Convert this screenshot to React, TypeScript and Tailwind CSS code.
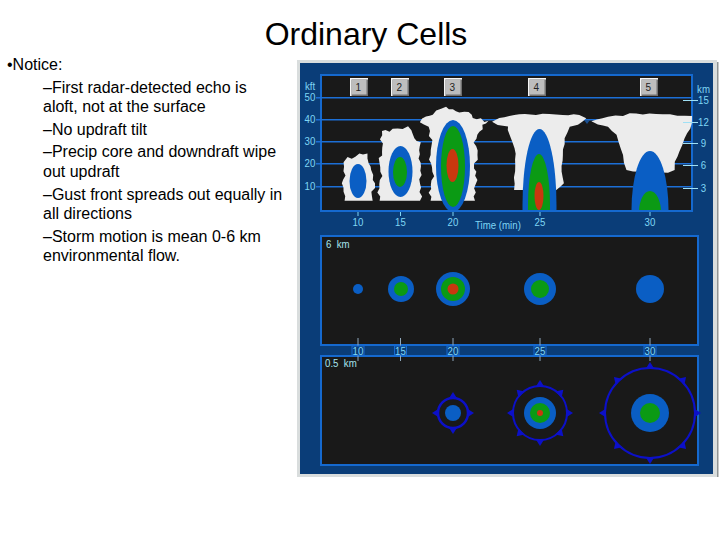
const BLUE = "#0a5ec4";
const GREEN = "#0b9a14";
const RED = "#c9380f";
const WHITE = "#ececec";
const BORDER = "#1569cf";
const INK = "#191919";
const FRAME = "#0a3d78";
const LABEL = "#7fd6f5";
const RING = "#0c10c8";

const notes: string[][] = [
  ["–First radar-detected echo is", "aloft, not at the surface"],
  ["–No updraft tilt"],
  ["–Precip core and downdraft wipe", "out updraft"],
  ["–Gust front spreads out equally in", "all directions"],
  ["–Storm motion is mean 0-6 km", "environmental flow."],
];

type Pt = [number, number];

// Breaks a cloud outline into small scallops; the closing edge (the flat base) stays straight.
function rough(points: Pt[], amp: number, step = 13): string {
  const out: Pt[] = [];
  let k = 0;
  for (let i = 0; i < points.length - 1; i++) {
    const [ax, ay] = points[i];
    const [bx, by] = points[i + 1];
    const len = Math.hypot(bx - ax, by - ay);
    const n = Math.max(1, Math.round(len / step));
    for (let j = 0; j < n; j++) {
      const t = j / n;
      const off = (Math.sin(k * 2.4) + 0.6 * Math.sin(k * 5.3 + 1)) * amp * (j === 0 ? 0.4 : 1);
      k++;
      out.push([ax + (bx - ax) * t - ((by - ay) / len) * off, ay + (by - ay) * t + ((bx - ax) / len) * off]);
    }
  }
  out.push(points[points.length - 1]);
  return `M${out.map(([x, y]) => `${x.toFixed(1)} ${y.toFixed(1)}`).join(" L")} Z`;
}

const cloud1: Pt[] = [[145, 437], [145, 410], [138, 385], [146, 362], [143, 322], [155, 308], [178, 305], [190, 295], [212, 296], [218, 325], [228, 345], [230, 375], [237, 385], [228, 410], [230, 437]];
const cloud2: Pt[] = [[250, 437], [250, 400], [254, 350], [250, 310], [258, 290], [258, 228], [290, 222], [320, 222], [335, 215], [348, 225], [355, 250], [372, 262], [370, 310], [375, 360], [372, 437]];
const cloud3: Pt[] = [[403, 437], [405, 390], [410, 350], [402, 300], [408, 255], [398, 215], [370, 200], [390, 185], [412, 180], [420, 165], [450, 155], [470, 165], [490, 172], [520, 170], [530, 190], [578, 198], [560, 210], [545, 240], [535, 262], [545, 300], [535, 340], [540, 350], [537, 437]];
const cloud4: Pt[] = [[654, 405], [658, 330], [656, 280], [636, 225], [636, 215], [605, 210], [588, 200], [610, 190], [640, 183], [670, 177], [720, 180], [760, 176], [800, 180], [850, 180], [871, 190], [846, 210], [821, 215], [806, 250], [801, 300], [796, 350], [804, 385], [781, 405]];
const cloud5: Pt[] = [[1011, 350], [991, 345], [981, 300], [961, 240], [936, 215], [906, 208], [886, 198], [936, 185], [981, 183], [1001, 175], [1100, 178], [1188, 183], [1188, 205], [1166, 250], [1151, 290], [1136, 320], [1136, 345], [1116, 353]];

function Label({ x, y, children, anchor = "middle", fill = LABEL }: { x: number; y: number; children: string; anchor?: "middle" | "start"; fill?: string }) {
  return (
    <text transform={`translate(${x} ${y}) scale(0.88 1)`} textAnchor={anchor} fontSize={11} fill={fill} fontFamily="'Liberation Sans',sans-serif" xmlSpace="preserve">
      {children}
    </text>
  );
}

function Key({ x, n }: { x: number; n: string }) {
  return (
    <g>
      <rect x={x} y={78} width={18} height={18} fill="#f6f6f6" />
      <rect x={x + 1.5} y={79.5} width={16.5} height={16.5} fill="#6f6f6f" />
      <rect x={x + 1.5} y={79.5} width={15} height={15} fill="#bdbdbd" />
      <text x={x + 5.5} y={91} fontSize={10} fill="#222222" fontFamily="'Liberation Sans',sans-serif">{n}</text>
    </g>
  );
}

function Ring({ cx, cy, r, count, width = 2 }: { cx: number; cy: number; r: number; count: number; width?: number }) {
  const marks = Array.from({ length: count }, (_, i) => (i * 360) / count);
  return (
    <g>
      <circle cx={cx} cy={cy} r={r} fill="none" stroke={RING} strokeWidth={width} />
      {marks.map((a) => (
        <polygon
          key={a}
          points={`${cx - 4.5},${cy - r + 1} ${cx + 4.5},${cy - r + 1} ${cx},${cy - r - 6}`}
          fill={RING}
          transform={`rotate(${a} ${cx} ${cy})`}
        />
      ))}
    </g>
  );
}

function Figure() {
  const leftRows: [number, string][] = [[97, "50"], [119, "40"], [141, "30"], [163, "20"], [186, "10"]];
  const rightRows: [number, string][] = [[100, "15"], [122, "12"], [143, "9"], [165, "6"], [188, "3"]];
  const times: [number, string][] = [[358, "10"], [400.5, "15"], [453, "20"], [540, "25"], [650, "30"]];
  return (
    <svg width={423} height={420} viewBox="297 60 423 420" className="block shrink-0">
      <rect x={297} y={60} width={420} height={417} fill="#d9dddd" />
      <rect x={300} y={63} width={413} height={411} fill={FRAME} />
      <rect x={717} y={62} width={1.5} height={415} fill="#8f9494" />

      <rect x={321} y={75} width={371} height={136} fill={INK} stroke={BORDER} strokeWidth={2} />
      <rect x={321} y={236} width={377} height={109} fill={INK} stroke={BORDER} strokeWidth={2} />
      <rect x={321} y={356} width={377} height={109} fill={INK} stroke={BORDER} strokeWidth={2} />

      {leftRows.map(([y]) => (
        <line key={y} x1={316} x2={692} y1={y + 0.75} y2={y + 0.75} stroke="#1c6fd6" strokeWidth={1.5} />
      ))}

      <clipPath id="plot">
        <rect x={322} y={76} width={369} height={134} />
      </clipPath>

      <g transform="translate(296 55) scale(0.33333)" fill={WHITE}>
        <path d={rough(cloud1, 4)} />
        <path d={rough(cloud2, 4)} />
        <path d={rough(cloud3, 4)} />
        <path d={rough(cloud4, 1.5, 20)} />
        <path d={rough(cloud5, 1.5, 20)} />
      </g>
      <polygon points="584,120 590,120 587,124" fill="#1a4f90" />

      <g clipPath="url(#plot)">
        <ellipse cx={358} cy={181} rx={8.5} ry={17} fill={BLUE} />
        <ellipse cx={400.5} cy={171.5} rx={12} ry={25.5} fill={BLUE} />
        <ellipse cx={400} cy={172} rx={7} ry={15} fill={GREEN} />
        <ellipse cx={453} cy={166} rx={17} ry={46} fill={BLUE} />
        <ellipse cx={453} cy={166.5} rx={12} ry={40.5} fill={GREEN} />
        <ellipse cx={452.5} cy={165.5} rx={6} ry={16.5} fill={RED} />
        <ellipse cx={539.5} cy={205} rx={17} ry={76} fill={BLUE} />
        <ellipse cx={539} cy={205} rx={11} ry={51} fill={GREEN} />
        <ellipse cx={539} cy={196} rx={4.5} ry={14} fill={RED} />
        <ellipse cx={650} cy={210} rx={18.5} ry={59} fill={BLUE} />
        <ellipse cx={650} cy={212} rx={11} ry={21} fill={GREEN} />
      </g>

      {rightRows.map(([y]) => (
        <line key={y} x1={683} x2={698} y1={y + 0.5} y2={y + 0.5} stroke="#9fe0f5" strokeWidth={1} />
      ))}

      <Key x={350} n="1" />
      <Key x={391} n="2" />
      <Key x={444} n="3" />
      <Key x={528} n="4" />
      <Key x={640} n="5" />

      <Label x={310} y={90}>kft</Label>
      {leftRows.map(([y, t]) => (
        <Label key={y} x={310} y={y + 4}>{t}</Label>
      ))}
      <Label x={703.5} y={92.5}>km</Label>
      {rightRows.map(([y, t]) => (
        <Label key={y} x={703.5} y={y + 4}>{t}</Label>
      ))}

      {times.map(([x, t]) => (
        <g key={t}>
          <line x1={x} x2={x} y1={212} y2={216} stroke={LABEL} strokeWidth={1} />
          <Label x={x} y={226}>{t}</Label>
          <line x1={x} x2={x} y1={338} y2={361} stroke="#8fa8bd" strokeWidth={1} />
          <rect x={x - 6} y={346} width={12} height={9} fill={FRAME} stroke={BORDER} strokeWidth={1} />
          <Label x={x} y={354.5}>{t}</Label>
        </g>
      ))}
      <Label x={475} y={229} anchor="start">Time (min)</Label>
      <Label x={326} y={248} anchor="start" fill="#a6e4ee">6  km</Label>
      <Label x={325} y={367} anchor="start" fill="#a6e4ee">0.5  km</Label>

      <circle cx={358} cy={289} r={5} fill={BLUE} />
      <circle cx={401} cy={289} r={13} fill={BLUE} />
      <circle cx={401} cy={289} r={7} fill={GREEN} />
      <circle cx={453} cy={289} r={17} fill={BLUE} />
      <circle cx={453} cy={289} r={12} fill={GREEN} />
      <circle cx={453} cy={289} r={5.5} fill={RED} />
      <circle cx={540} cy={289} r={16} fill={BLUE} />
      <circle cx={540} cy={289} r={9} fill={GREEN} />
      <circle cx={650} cy={289} r={14} fill={BLUE} />

      <circle cx={453} cy={413} r={8} fill={BLUE} />
      <Ring cx={453} cy={413} r={15} count={4} width={2.5} />
      <circle cx={540} cy={413} r={16} fill={BLUE} />
      <circle cx={540} cy={413} r={10} fill={GREEN} />
      <circle cx={540} cy={413} r={3} fill={RED} />
      <Ring cx={540} cy={413} r={27} count={8} />
      <circle cx={650} cy={413} r={19} fill={BLUE} />
      <circle cx={650} cy={413} r={10} fill={GREEN} />
      <Ring cx={650} cy={413} r={45} count={8} />
    </svg>
  );
}

export default function App() {
  return (
    <div className="w-[720px] h-[540px] overflow-hidden bg-white text-black font-['Liberation_Sans',Arial,sans-serif]">
      <h1 className="h-[55px] pt-[16px] pl-[12px] text-center text-[32px] leading-[37px] font-normal">Ordinary Cells</h1>
      <div className="flex">
        <div className="w-[297px] shrink-0 text-[16px] leading-[19.5px]">
          <p className="pl-[7px] mb-[3px]">•Notice:</p>
          <ul className="pl-[43px] flex flex-col gap-[3.2px]">
            {notes.map((lines) => (
              <li key={lines[0]}>
                {lines.map((line) => (
                  <div key={line} className="whitespace-nowrap">{line}</div>
                ))}
              </li>
            ))}
          </ul>
        </div>
        <div className="mt-[5px]">
          <Figure />
        </div>
      </div>
    </div>
  );
}
